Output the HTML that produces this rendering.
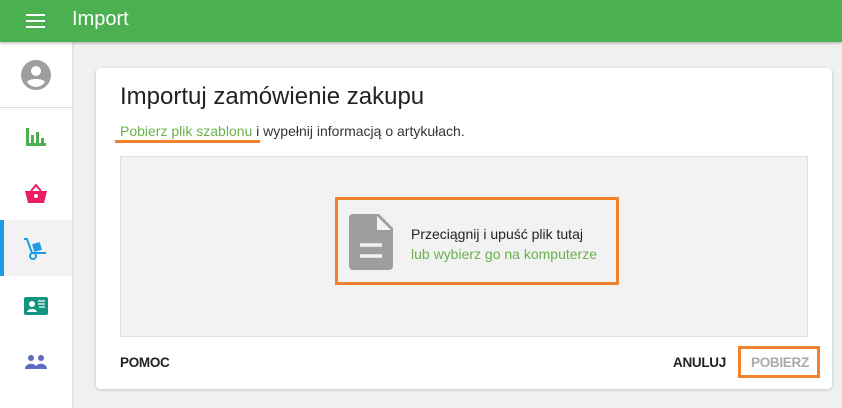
<!DOCTYPE html>
<html><head><style>
*{margin:0;padding:0;box-sizing:border-box}
body{width:842px;height:408px;background:#f0f0f0;font-family:"Liberation Sans",sans-serif;position:relative;overflow:hidden}
.top{position:absolute;left:0;top:0;width:842px;height:42px;background:#4caf50;box-shadow:0 1px 3px rgba(0,0,0,.3);z-index:2}
.top .t{position:absolute;left:72px;top:8px;color:#fff;font-size:20px}
.ham{position:absolute;left:26px;width:19px;height:2px;background:#fff}
.side{position:absolute;left:0;top:42px;width:72px;height:366px;background:#fff;box-shadow:1px 0 2px rgba(0,0,0,.1)}
.card{position:absolute;left:96px;top:68px;width:736px;height:321px;background:#fff;border-radius:4px;box-shadow:0 1px 3px rgba(0,0,0,.2)}
h1{position:absolute;left:24px;top:15px;font-weight:normal;font-size:24px;color:#222}
.sub{position:absolute;left:24px;top:55px;font-size:14px;color:#333}
.g{color:#6ab04c}
.drop{position:absolute;left:24px;top:88px;width:688px;height:181px;background:#f2f2f2;border:1px solid #e0e0e0}
.box{position:absolute;left:239px;top:129px;width:284px;height:88px;border:3px solid #f0812d}
.btn{position:absolute;font-weight:bold;font-size:13.5px;letter-spacing:-0.3px}
</style></head><body>
<div class="top"><div class="ham" style="top:14px"></div><div class="ham" style="top:20px"></div><div class="ham" style="top:26px"></div><div class="t">Import</div></div>
<div class="side">
<svg style="position:absolute;left:21px;top:18px" width="30" height="30" viewBox="0 0 30 30"><circle cx="15" cy="15" r="15" fill="#9e9e9e"/><circle cx="15" cy="11" r="5" fill="#fff"/><path d="M6 22c2-4 16-4 18 0c-2 3-6 5-9 5s-7-2-9-5z" fill="#fff"/></svg>
<div style="position:absolute;left:0;top:65px;width:72px;height:1px;background:#ddd"></div>
<svg style="position:absolute;left:26px;top:86px" width="20" height="18"><path d="M0 0h3v18H0zM3 15h17v3H3zM5 7h3v9H5zM10 4h3v12h-3zM15 10h3v6h-3z" fill="#4caf50"/></svg>
<svg style="position:absolute;left:25px;top:142px" width="22" height="20"><path d="M0 7h22l-3 12H3z" fill="#e91e63"/><path d="M6 7l5-6 5 6" stroke="#e91e63" stroke-width="2" fill="none"/><circle cx="11" cy="12" r="2" fill="#fff"/></svg>
<div style="position:absolute;left:0;top:178px;width:72px;height:56px;background:#f2f2f2"></div>
<div style="position:absolute;left:0;top:178px;width:4px;height:56px;background:#1e9be4"></div>
<svg style="position:absolute;left:24px;top:196px" width="24" height="22"><path d="M0 1h3l5 14h14" stroke="#1e9be4" stroke-width="2" fill="none"/><rect x="9" y="5" width="8" height="8" fill="#1e9be4" transform="rotate(-15 13 9)"/><circle cx="9" cy="18" r="3" fill="none" stroke="#1e9be4" stroke-width="2"/></svg>
<svg style="position:absolute;left:24px;top:255px" width="24" height="18"><rect width="24" height="18" rx="2" fill="#129580"/><circle cx="8" cy="7" r="3" fill="#fff"/><path d="M3 15c1-4 9-4 10 0z" fill="#fff"/><path d="M14 4h7M14 7h7M15 10h6" stroke="#fff" stroke-width="1.3"/></svg>
<svg style="position:absolute;left:25px;top:313px" width="22" height="14"><circle cx="6" cy="3" r="3" fill="#5c6bc0"/><circle cx="16" cy="3" r="3" fill="#5c6bc0"/><path d="M0 14c0-7 12-7 12 0zM10 14c0-7 12-7 12 0z" fill="#5c6bc0"/></svg>
</div>
<div class="card">
<h1>Importuj zamówienie zakupu</h1>
<div class="sub"><span class="g">Pobierz plik szablonu</span> i wypełnij informacją o artykułach.</div>
<div style="position:absolute;left:19px;top:72px;width:145px;height:3px;background:#f0812d"></div>
<div class="drop"></div>
<div class="box"></div>
<svg style="position:absolute;left:253px;top:146px" width="44" height="56" viewBox="0 0 44 56"><path d="M4 0h26l14 14v38a4 4 0 0 1-4 4H4a4 4 0 0 1-4-4V4a4 4 0 0 1 4-4z" fill="#9e9e9e"/><path d="M28 2v14h14" fill="#f2f2f2"/><path d="M11 31h22M11 42h22" stroke="#f2f2f2" stroke-width="3.5"/></svg>
<div style="position:absolute;left:315px;top:158px;font-size:14px;color:#222">Przeciągnij i upuść plik tutaj</div>
<div style="position:absolute;left:315px;top:178px;font-size:14px" class="g">lub wybierz go na komputerze</div>
<div class="btn" style="left:24px;top:287px;color:#222">POMOC</div>
<div class="btn" style="left:577px;top:287px;color:#222">ANULUJ</div>
<div style="position:absolute;left:642px;top:278px;width:82px;height:32px;border:3px solid #f0812d"></div>
<div class="btn" style="left:655px;top:287px;color:#aaa">POBIERZ</div>
</div>
</body></html>
